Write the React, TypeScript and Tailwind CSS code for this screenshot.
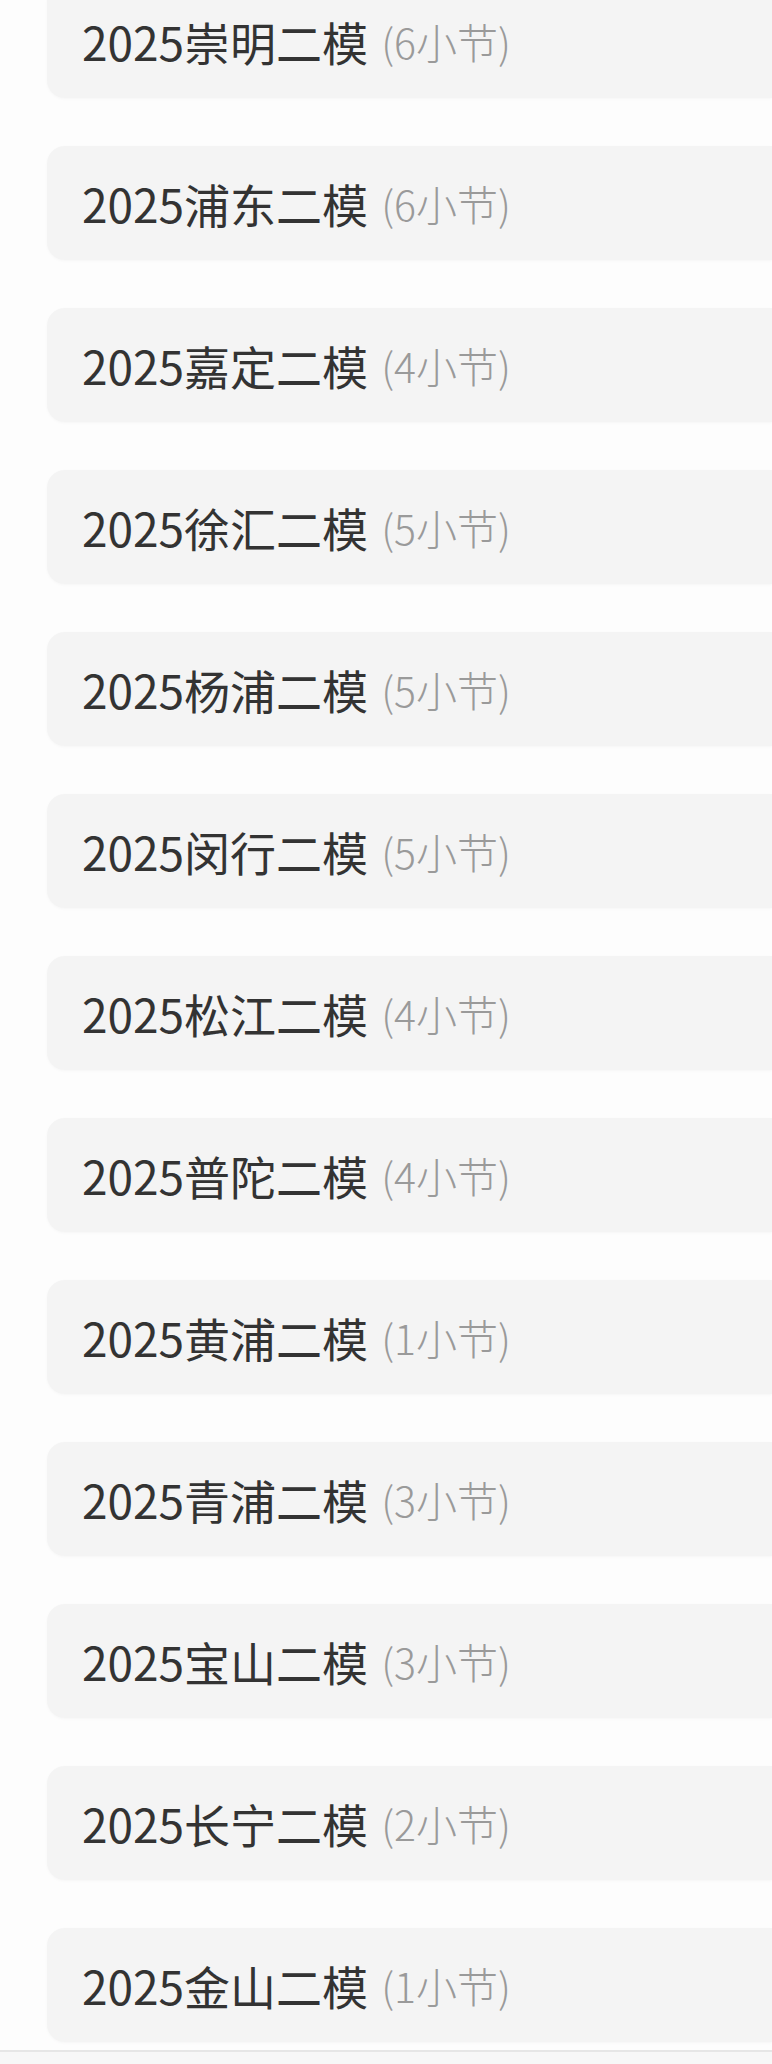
const papers = [
  { name: "2025崇明二模", count: 6 },
  { name: "2025浦东二模", count: 6 },
  { name: "2025嘉定二模", count: 4 },
  { name: "2025徐汇二模", count: 5 },
  { name: "2025杨浦二模", count: 5 },
  { name: "2025闵行二模", count: 5 },
  { name: "2025松江二模", count: 4 },
  { name: "2025普陀二模", count: 4 },
  { name: "2025黄浦二模", count: 1 },
  { name: "2025青浦二模", count: 3 },
  { name: "2025宝山二模", count: 3 },
  { name: "2025长宁二模", count: 2 },
  { name: "2025金山二模", count: 1 },
];

function PaperRow({ name, count }: { name: string; count: number }) {
  return (
    <div className="flex h-[114px] items-center rounded-l-[18px] bg-[#f4f4f4] pl-[35px] shadow-[0_1px_3px_rgba(0,0,0,0.03)]">
      <span className="text-[46px] leading-none text-[#333333]">{name}</span>
      <span className="ml-[13px] text-[41px] font-light leading-none text-[#9a9a9a]">
        ({count}小节)
      </span>
    </div>
  );
}

export default function App() {
  return (
    <div
      className="h-[2064px] w-[772px] overflow-hidden bg-[#fdfdfd]"
      style={{ fontFamily: '"Noto Sans CJK SC", "Noto Sans", sans-serif' }}
    >
      <div className="-mt-[16px] flex flex-col gap-[48px] pl-[47px]">
        {papers.map((p) => (
          <PaperRow key={p.name} name={p.name} count={p.count} />
        ))}
      </div>
      <div className="mt-[8px] h-[2px] bg-[#e6e6e6]" />
      <div className="h-[12px] bg-[#f7f7f7]" />
    </div>
  );
}
